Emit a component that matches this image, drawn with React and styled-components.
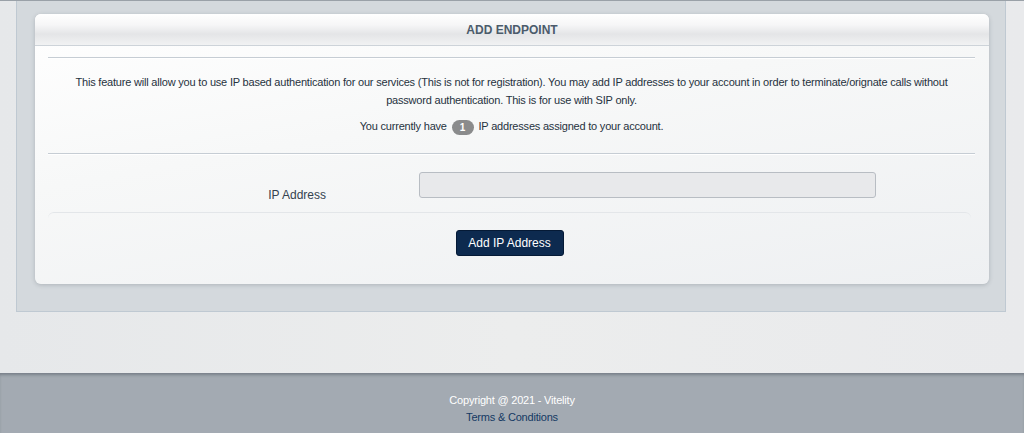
import React from "react";
import styled, { createGlobalStyle } from "styled-components";

const GlobalStyle = createGlobalStyle`
    html, body {
        margin: 0;
        padding: 0;
        background-color: #e8e9eb;
        font-family: "Liberation Sans", Arial, sans-serif;
    }
`;

const Page = styled.div`
    min-height: 433px;
    border-top: 1px solid #9aa1a8;
    background: linear-gradient(90deg, #e6e8ea, #eceded 50%, #e9eaec);
    display: flex;
    flex-direction: column;
`;

const Main = styled.div`
    padding: 0 18px 0 16px;
`;

const OuterPanel = styled.div`
    background-color: #d4d9dd;
    border: 1px solid #bfc9d2;
    border-top: none;
    padding: 13px 16px 27px 18px;
`;

const Card = styled.div`
    background: linear-gradient(170deg, #ffffff 0%, #f7f8f8 40%, #eef0f2 100%);
    border-radius: 6px;
    box-shadow: 0 1px 4px rgba(60, 70, 80, 0.25);
    overflow: hidden;
`;

const CardHeader = styled.div`
    height: 31px;
    display: flex;
    align-items: center;
    justify-content: center;
    background: linear-gradient(#ffffff 0%, #f6f6f7 35%, #e4e5e7 65%, #f1f2f3 100%);
    border-bottom: 1px solid #cdd3d9;
    font-size: 12px;
    font-weight: 700;
    color: #4b5b6b;
`;

const CardBody = styled.div`
    padding: 11px 14px 0 13px;
`;

const Divider = styled.div`
    border-top: 1px solid #c6cdd4;
    border-bottom: 1px solid #ffffff;
`;

const Intro = styled.div`
    padding: 14px 10px 18px;
    text-align: center;
    color: #26323e;
    font-size: 11px;
    letter-spacing: -0.2px;
    line-height: 18px;
`;

const IntroText = styled.p`
    margin: 0;
    & + & {
        margin-top: 8px;
    }
`;

const Badge = styled.span`
    display: inline-block;
    min-width: 10px;
    padding: 0 6px;
    height: 15px;
    line-height: 15px;
    border-radius: 8px;
    background-color: #8a8b8c;
    color: #ffffff;
    font-weight: 700;
    font-size: 10px;
    letter-spacing: 0;
    vertical-align: -1px;
    margin: 0 2px;
`;

const FormRow = styled.div`
    display: flex;
    align-items: flex-start;
    padding: 17px 0 8px;
`;

const FieldLabel = styled.label`
    width: 278px;
    text-align: right;
    padding-top: 14px;
    margin-right: 93px;
    font-size: 12px;
    line-height: 18px;
    color: #34424f;
`;

const TextInput = styled.input`
    box-sizing: border-box;
    width: 457px;
    height: 26px;
    border: 1px solid #b8bdc3;
    border-radius: 3px;
    background-color: #e8e9eb;
    outline: none;
    padding: 0 6px;
    font-family: inherit;
`;

const FormActions = styled.div`
    border-top: 1px solid #e3e6e9;
    border-radius: 6px 6px 0 0;
    margin-right: 4px;
    padding: 17px 0 28px;
    display: flex;
    justify-content: center;
`;

const PrimaryButton = styled.button`
    box-sizing: border-box;
    width: 108px;
    height: 26px;
    background-color: #0d2a4f;
    border: 1px solid #051a36;
    border-radius: 3px;
    color: #ffffff;
    font-family: inherit;
    font-size: 12px;
    padding: 0;
    cursor: pointer;
`;

const Spacer = styled.div`
    height: 61px;
`;

const Footer = styled.footer`
    flex: 1;
    min-height: 60px;
    background-color: #a3aab2;
    box-shadow: inset 0 3px 3px -1px rgba(40, 50, 60, 0.35);
    text-align: center;
    font-size: 11px;
    letter-spacing: -0.2px;
    padding-top: 19px;
    line-height: 17px;
`;

const Copyright = styled.div`
    color: #ffffff;
`;

const FooterLink = styled.a`
    color: #143963;
    text-decoration: none;
`;

export default function App() {
    return (
        <>
            <GlobalStyle />
            <Page>
                <Main>
                    <OuterPanel>
                        <Card>
                            <CardHeader>ADD ENDPOINT</CardHeader>
                            <CardBody>
                                <Divider />
                                <Intro>
                                    <IntroText>
                                        This feature will allow you to use IP based authentication for our services (This is not for registration). You may add IP addresses to your account in order to terminate/orignate calls without password authentication. This is for use with SIP only.
                                    </IntroText>
                                    <IntroText>
                                        You currently have <Badge>1</Badge> IP addresses assigned to your account.
                                    </IntroText>
                                </Intro>
                                <Divider />
                                <FormRow>
                                    <FieldLabel htmlFor="ip">IP Address</FieldLabel>
                                    <TextInput id="ip" type="text" />
                                </FormRow>
                                <FormActions>
                                    <PrimaryButton>Add IP Address</PrimaryButton>
                                </FormActions>
                            </CardBody>
                        </Card>
                    </OuterPanel>
                </Main>
                <Spacer />
                <Footer>
                    <Copyright>Copyright @ 2021 - Vitelity</Copyright>
                    <FooterLink href="#">Terms &amp; Conditions</FooterLink>
                </Footer>
            </Page>
        </>
    );
}
